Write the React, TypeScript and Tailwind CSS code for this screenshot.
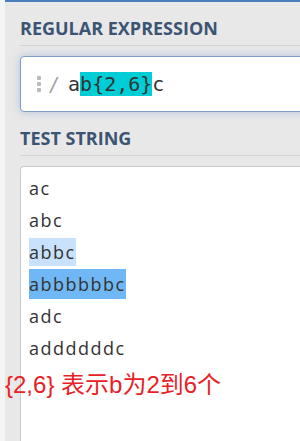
import React from "react";

const lines: { text: string; hl?: "light" | "dark" }[] = [
  { text: "ac" },
  { text: "abc" },
  { text: "abbc", hl: "light" },
  { text: "abbbbbbc", hl: "dark" },
  { text: "adc" },
  { text: "addddddc" },
];

function Heading({ children }: { children: React.ReactNode }) {
  return (
    <div>
      <h2 className="text-[18px] font-bold leading-[24px] text-[#3c5473]">
        {children}
      </h2>
      <div className="mt-[5px] h-px bg-[#d3d3d3]" />
    </div>
  );
}

export default function App() {
  return (
    <div className="relative flex h-[441px] w-[300px] overflow-hidden bg-[#e8e8e8] font-['Open_Sans',sans-serif]">
      <div className="w-[5px] shrink-0 bg-[#f4f4f4]" />

      <div className="flex min-w-0 flex-1 flex-col border-t-2 border-[#4b7dbf] pl-[15px] pt-[14px]">
        <Heading>REGULAR EXPRESSION</Heading>

        {/* regex input (focused) */}
        <div className="-mr-[20px] mt-[10px] flex h-[56px] shrink-0 items-center rounded-l-[4px] border border-[#7c9dcb] bg-white pl-[16px] shadow-[0_0_8px_rgba(80,130,200,0.35)]">
          <div className="flex flex-col gap-[2px]">
            <span className="h-[4px] w-[4px] rounded-[1px] bg-[#bababa]" />
            <span className="h-[4px] w-[4px] rounded-[1px] bg-[#bababa]" />
            <span className="h-[4px] w-[4px] rounded-[1px] bg-[#bababa]" />
          </div>
          <div className="ml-[7px] font-['DejaVu_Sans_Mono',monospace] text-[20px] leading-[23px] text-[#333]">
            <span className="text-[#a3a3a3]">/</span>
            <span className="ml-[8px]">a</span>
            <span className="bg-[#00cdd6]">b{"{"}2,6{"}"}</span>
            <span>c</span>
          </div>
        </div>

        <div className="mt-[14px]">
          <Heading>TEST STRING</Heading>
        </div>

        {/* test string area */}
        <div className="-mr-[20px] mt-[10px] flex-1 rounded-tl-[4px] border-l border-t border-[#c9c9c9] bg-white pl-[8px] pt-[5px]">
          {lines.map((l) => (
            <div
              key={l.text}
              className="text-[18px] leading-[32px] tracking-[1.5px] text-[#333]"
            >
              <span
                className={
                  l.hl === "light"
                    ? "bg-[#c7e2fa] py-[2px]"
                    : l.hl === "dark"
                      ? "bg-[#70b8f5] py-[3px]"
                      : ""
                }
              >
                {l.text}
              </span>
            </div>
          ))}
        </div>
      </div>

      {/* red annotation on top */}
      <p className="absolute left-[5px] top-[370px] whitespace-nowrap font-['Liberation_Sans','Noto_Sans_CJK_SC',sans-serif] text-[24px] leading-[30px] text-[#e82127]">
        {"{2,6}"} 表示b为2到6个
      </p>
    </div>
  );
}
